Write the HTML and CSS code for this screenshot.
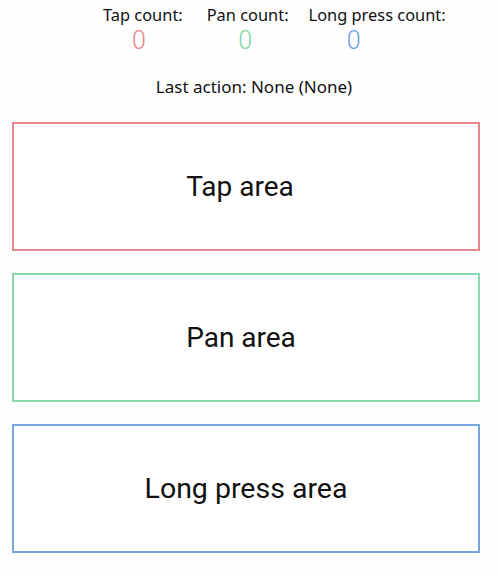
FILE: index.html
```html
<!DOCTYPE html>
<html lang="en">
<head>
<meta charset="utf-8">
<title>Gestures</title>
<link rel="stylesheet" href="styles.css">
</head>
<body>
<div class="page">
  <div class="counters">
    <div class="counter">
      <div class="counter-label">Tap count:</div>
      <div class="counter-value value-tap">0</div>
    </div>
    <div class="counter counter-pan">
      <div class="counter-label">Pan count:</div>
      <div class="counter-value value-pan">0</div>
    </div>
    <div class="counter">
      <div class="counter-label">Long press count:</div>
      <div class="counter-value value-long">0</div>
    </div>
  </div>
  <div class="last-action">Last action: None (None)</div>
  <div class="areas">
    <div class="area area-tap"><span class="area-label">Tap area</span></div>
    <div class="area area-pan"><span class="area-label">Pan area</span></div>
    <div class="area area-long"><span class="area-label">Long press area</span></div>
  </div>
</div>
</body>
</html>
```
FILE: styles.css
```css
html, body {
  margin: 0;
  padding: 0;
  background: #fefefe;
}
body {
  font-family: "Noto Sans", "Liberation Sans", sans-serif;
  color: #111;
}
.page {
  display: flex;
  flex-direction: column;
}
.counters {
  display: flex;
  padding: 4px 0 0 103px;
  gap: 20px;
}
.counter {
  display: flex;
  flex-direction: column;
  align-items: flex-start;
}
.counter-pan {
  margin-left: 4px;
}
.counter-label {
  font-size: 16.4px;
  line-height: 22px;
}
.counter-value {
  width: 72px;
  text-align: center;
  font-family: Roboto, "Noto Sans", sans-serif;
  font-weight: 300;
  font-size: 25px;
  line-height: 29px;
}
.value-tap { color: #e9868c; }
.value-pan { color: #7fd8a5; width: 77px; }
.value-long { color: #6c9fe6; width: 90px; }
.last-action {
  margin-top: 20px;
  padding-left: 10px;
  text-align: center;
  font-size: 17px;
  line-height: 23px;
}
.areas {
  display: flex;
  flex-direction: column;
  gap: 22px;
  margin-top: 24px;
  padding: 0 18px 0 12px;
}
.area {
  box-sizing: border-box;
  height: 129px;
  border: 2px solid;
  display: flex;
  align-items: center;
  justify-content: center;
  font-family: Roboto, "Noto Sans", sans-serif;
  font-size: 28px;
  color: #111;
  background: #fff;
}
.area-tap { border-color: #e8878c; padding-right: 12px; }
.area-pan { border-color: #8ad9ad; padding-right: 10px; }
.area-long { border-color: #76a5e0; font-size: 28.5px; }
```
